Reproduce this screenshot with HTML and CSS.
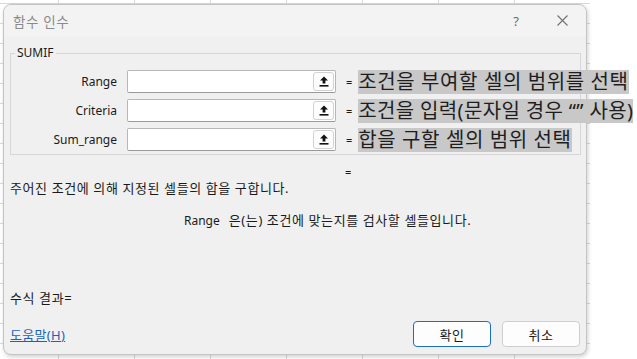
FILE: index.html
```html
<!DOCTYPE html>
<html lang="ko">
<head>
<meta charset="utf-8">
<title>함수 인수</title>
<link rel="stylesheet" href="styles.css">
</head>
<body>
<div class="page">
  <div class="sheet"></div>
  <div class="dialog">
    <div class="titlebar">
      <span class="title">함수 인수</span>
      <span class="help">?</span>
      <span class="close">
        <svg width="11" height="11" viewBox="0 0 11 11"><path d="M0.5 0.5 L10.5 10.5 M10.5 0.5 L0.5 10.5" stroke="#707070" stroke-width="1.1" fill="none"/></svg>
      </span>
    </div>
    <fieldset class="group">
      <legend>SUMIF</legend>
      <div class="arg-row">
        <span class="arg-label">Range</span>
        <div class="ref-input"><span class="ref-btn"><svg width="10" height="11" viewBox="0 0 10 11"><path d="M5 0.5 L9 4.5 H6.4 V7.5 H3.6 V4.5 H1 Z" fill="#111"/><rect x="0.5" y="9" width="9" height="1.6" fill="#111"/></svg></span></div>
        <span class="eq">=</span>
        <span class="note">조건을 부여할 셀의 범위를 선택</span>
      </div>
      <div class="arg-row">
        <span class="arg-label">Criteria</span>
        <div class="ref-input"><span class="ref-btn"><svg width="10" height="11" viewBox="0 0 10 11"><path d="M5 0.5 L9 4.5 H6.4 V7.5 H3.6 V4.5 H1 Z" fill="#111"/><rect x="0.5" y="9" width="9" height="1.6" fill="#111"/></svg></span></div>
        <span class="eq">=</span>
        <span class="note note-tight">조건을 입력(문자일 경우 “” 사용)</span>
      </div>
      <div class="arg-row">
        <span class="arg-label">Sum_range</span>
        <div class="ref-input"><span class="ref-btn"><svg width="10" height="11" viewBox="0 0 10 11"><path d="M5 0.5 L9 4.5 H6.4 V7.5 H3.6 V4.5 H1 Z" fill="#111"/><rect x="0.5" y="9" width="9" height="1.6" fill="#111"/></svg></span></div>
        <span class="eq">=</span>
        <span class="note">합을 구할 셀의 범위 선택</span>
      </div>
    </fieldset>
    <div class="eq-line"><span class="eq">=</span></div>
    <p class="desc">주어진 조건에 의해 지정된 셀들의 합을 구합니다.</p>
    <p class="arg-desc"><span class="arg-name">Range</span>은(는) 조건에 맞는지를 검사할 셀들입니다.</p>
    <p class="result">수식 결과=</p>
    <div class="footer">
      <a class="help-link" href="#">도움말(H)</a>
      <div class="buttons">
        <button class="btn primary">확인</button>
        <button class="btn">취소</button>
      </div>
    </div>
  </div>
</div>
</body>
</html>
```
FILE: styles.css
```css
html, body {
  margin: 0;
  padding: 0;
  background: #ffffff;
}
body {
  font-family: "Noto Sans", "Noto Sans CJK KR", sans-serif;
  font-size: 12px;
  color: #1a1a1a;
}
.page {
  position: relative;
  width: 637px;
  height: 359px;
  overflow: hidden;
  background: #ffffff;
}
.sheet {
  position: absolute;
  left: 0;
  top: 0;
  width: 590px;
  height: 359px;
  background-color: #ffffff;
  background-image:
    linear-gradient(to right, #d9d9d9 1px, transparent 1px),
    linear-gradient(to bottom, #d9d9d9 1px, transparent 1px);
  background-size: 76px 20px, 76px 20px;
  background-position: 58px 0, 0 3px;
}
.dialog {
  position: absolute;
  left: 3px;
  top: 4px;
  width: 584px;
  height: 351px;
  box-sizing: border-box;
  border: 1px solid #c4c4c4;
  border-radius: 8px;
  background: #f0f0f0;
  box-shadow: 1px 2px 4px rgba(0, 0, 0, 0.18);
  display: flex;
  flex-direction: column;
}
.titlebar {
  height: 31px;
  display: flex;
  align-items: center;
  padding-left: 9px;
  background: #f3f3f3;
  border-radius: 8px 8px 0 0;
}
.title {
  font-size: 13.5px;
  letter-spacing: 0.6px;
  color: #8a8a8a;
}
.help {
  margin-left: auto;
  font-size: 13px;
  color: #6a6a6a;
}
.close {
  display: flex;
  margin-left: 38px;
  margin-right: 18px;
}
.group {
  box-sizing: border-box;
  width: 571px;
  min-width: 0;
  margin: 9px 0 0 6px;
  padding: 9px 0 3px 0;
  border: 1px solid #d6d6d6;
  display: flex;
  flex-direction: column;
  gap: 6px;
}
.group legend {
  margin-left: 4px;
  padding: 0 2px;
  font-size: 12px;
  line-height: 16px;
  color: #1a1a1a;
}
.arg-row {
  display: flex;
  align-items: center;
  height: 23px;
  white-space: nowrap;
}
.arg-label {
  flex: none;
  width: 106px;
  text-align: right;
  font-size: 12px;
}
.ref-input {
  flex: none;
  box-sizing: border-box;
  width: 209px;
  height: 23px;
  margin-left: 10px;
  background: #ffffff;
  border: 1px solid #b7b7b7;
  border-bottom-color: #9a9a9a;
  border-radius: 2px;
  display: flex;
  justify-content: flex-end;
  align-items: center;
  padding-right: 1px;
}
.ref-btn {
  box-sizing: border-box;
  width: 21px;
  height: 19px;
  border: 1px solid #d2d2d2;
  border-radius: 3px;
  background: #fdfdfd;
  display: flex;
  align-items: center;
  justify-content: center;
}
.eq {
  flex: none;
  margin-left: 10px;
  font-size: 11px;
  line-height: 16px;
}
.note {
  flex: none;
  margin-left: 6px;
  font-size: 20px;
  letter-spacing: 0.6px;
  line-height: 24px;
  background: #c8c8c8;
  color: #1e1e1e;
}
.note-tight {
  letter-spacing: 0.35px;
}
.eq-line {
  margin-top: 9px;
  height: 16px;
  padding-left: 341px;
  display: flex;
  align-items: center;
}
.eq-line .eq {
  margin-left: 0;
}
.desc {
  margin: 0;
  padding-left: 6px;
  line-height: 16px;
  font-size: 13px;
  letter-spacing: 0.6px;
}
.arg-desc {
  margin: 16px 0 0 0;
  padding-left: 180px;
  line-height: 16px;
  font-size: 13px;
  letter-spacing: 0.6px;
}
.arg-name {
  margin-right: 9px;
  font-size: 12px;
  letter-spacing: 0;
}
.result {
  margin: 61px 0 0 0;
  padding-left: 6px;
  line-height: 16px;
  font-size: 13px;
  letter-spacing: 0.6px;
}
.footer {
  margin-top: 15px;
  height: 26px;
  display: flex;
  align-items: center;
  padding: 0 6px;
}
.help-link {
  font-size: 13px;
  letter-spacing: 0.3px;
  color: #1a62b8;
  text-decoration: underline;
}
.buttons {
  margin-left: auto;
  display: flex;
  gap: 11px;
}
.btn {
  box-sizing: border-box;
  width: 78px;
  height: 26px;
  border: 1px solid #cfcfcf;
  border-radius: 4px;
  background: #fdfdfd;
  font-family: "Noto Sans", "Noto Sans CJK KR", sans-serif;
  font-size: 13px;
  letter-spacing: 0.6px;
  color: #1a1a1a;
  padding: 0;
}
.btn.primary {
  border: 1.5px solid #1a6fc4;
}
```
